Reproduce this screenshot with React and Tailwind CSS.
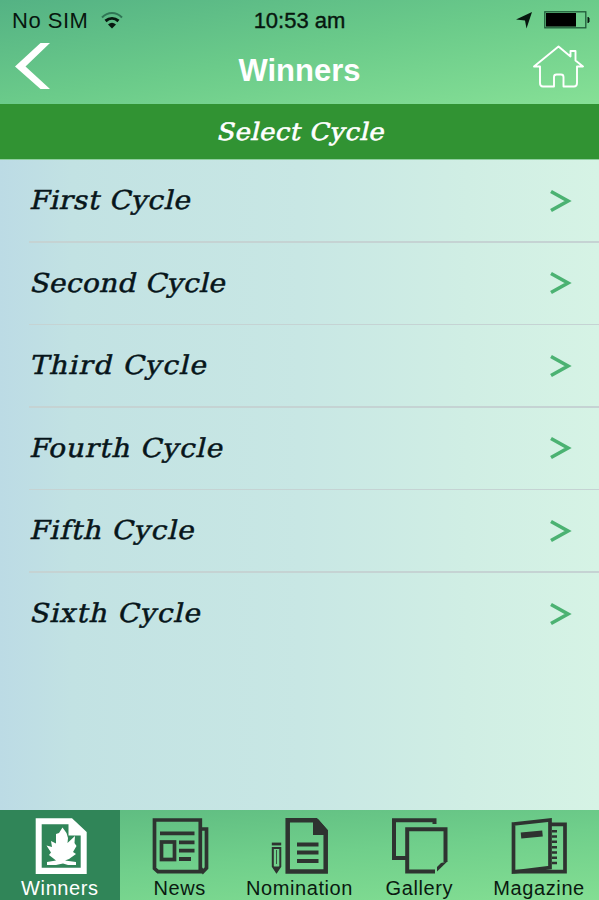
const CYCLES = [
  { label: 'First Cycle', spacing: 'tracking-[0.5px]' },
  { label: 'Second Cycle', spacing: 'tracking-[0.3px]' },
  { label: 'Third Cycle', spacing: 'tracking-[1.1px]' },
  { label: 'Fourth Cycle', spacing: 'tracking-[0.8px]' },
  { label: 'Fifth Cycle', spacing: 'tracking-[0.8px]' },
  { label: 'Sixth Cycle', spacing: 'tracking-[0.9px]' },
]

const TABS = [
  { label: 'Winners', Icon: WinnersIcon, active: true },
  { label: 'News', Icon: NewsIcon },
  { label: 'Nomination', Icon: NominationIcon },
  { label: 'Gallery', Icon: GalleryIcon },
  { label: 'Magazine', Icon: MagazineIcon },
]

export default function App() {
  return (
    <div className="flex h-[900px] w-[599px] flex-col overflow-hidden bg-[linear-gradient(90deg,#bcdbe5_0%,#c2e2e3_12%,#c8e7e4_50%,#d0eee4_78%,#d6f3e5_100%)] font-['Liberation_Sans',sans-serif]">
      <div className="h-[104px] shrink-0 bg-[linear-gradient(170deg,#54b284_0%,#6bcb8a_50%,#86e096_100%)]">
        <StatusBar />
        <Header />
      </div>

      <div className="flex h-[56px] shrink-0 items-center justify-center border-b border-[#8fcf9f] bg-[#319333]">
        <h2 className="ml-[5px] scale-x-[1.08] -skew-x-12 font-['DejaVu_Serif',serif] text-[24px] leading-none tracking-[0.4px] text-white [-webkit-text-stroke:0.6px_white]">
          Select Cycle
        </h2>
      </div>

      <ul className="flex-1">
        {CYCLES.map((c, i) => (
          <li key={c.label} className="flex h-[82.5px] flex-col pl-[29px]">
            <div className="flex flex-1 items-center justify-between pr-[27px]">
              <span className={`mb-px ml-[2px] origin-left scale-x-[1.08] -skew-x-12 font-['DejaVu_Serif',serif] text-[26px] leading-none text-[#07151a] [-webkit-text-stroke:0.5px_#07151a] ${c.spacing}`}>
                {c.label}
              </span>
              <svg width="24" height="24" viewBox="0 0 24 24" fill="none" stroke="#4bb272" strokeWidth="3.6">
                <path d="M3 2.5L20 12L3 21.5" />
              </svg>
            </div>
            {i < CYCLES.length - 1 && <div className="h-[1.5px] bg-[#c5d3d3]" />}
          </li>
        ))}
      </ul>

      <nav className="grid h-[90px] shrink-0 grid-cols-5 bg-[linear-gradient(175deg,#5dba80_0%,#70cf8b_50%,#83de93_100%)]">
        {TABS.map(({ label, Icon, active }) => (
          <div
            key={label}
            className={`flex flex-col items-center pt-[5px] ${active ? 'bg-[#308558] text-white' : 'text-[#0a1a10]'}`}
          >
            <Icon />
            <span className="mt-[2px] text-[20px] leading-[22px] tracking-[0.6px] whitespace-nowrap">{label}</span>
          </div>
        ))}
      </nav>
    </div>
  )
}

function StatusBar() {
  return (
    <div className="grid h-[40px] grid-cols-3 items-center text-[22px] text-[#07170f]">
      <div className="flex items-center gap-[13px] pl-[12px]">
        <span className="tracking-[0.5px]">No SIM</span>
        <svg width="22" height="17" viewBox="0 0 22 17" fill="none">
          <path d="M1 5.5C7-.5 15-.5 21 5.5" stroke="#2f7555" strokeWidth="2" />
          <path d="M4.5 9C8.500 5.500 13.500 5.500 17.500 9" stroke="#07170f" strokeWidth="3" />
          <path d="M7 12.500Q11 9 15 12.500L11 16.500Z" fill="#07170f" />
        </svg>
      </div>
      <span className="text-center [-webkit-text-stroke:0.4px_#07170f]">10:53 am</span>
      <div className="flex items-center justify-end gap-[11px] pr-[9px]">
        <svg width="18" height="17" viewBox="0 0 18 17" fill="#07170f">
          <path d="M17 0L11.500 16.500L10 8.500L1 7.500Z" />
        </svg>
        <svg width="46" height="18" viewBox="0 0 46 18">
          <rect x=".8" y=".8" width="41" height="16" fill="none" stroke="#1f5a39" strokeWidth="1.300" />
          <rect x="2" y="2" width="30" height="13.600" fill="#000" />
          <path d="M43.500 6h1l1 1.500v3l-1 1.500h-1z" fill="#07170f" />
        </svg>
      </div>
    </div>
  )
}

function Header() {
  return (
    <div className="grid h-[60px] grid-cols-3 items-center">
      <svg className="mt-[-8px] ml-[15px]" width="36" height="48" viewBox="0 0 36 48" fill="#fff">
        <path d="M25.500 1H35L10.500 24.500L35 47H25.500L0 24.500Z" />
      </svg>
      <h1 className="text-center text-[31px] leading-none font-bold text-white">Winners</h1>
      <svg className="mt-[-6px] mr-[15px] justify-self-end" width="52" height="44" viewBox="0 0 52 44" fill="none" stroke="#fff" strokeWidth="1.900" strokeLinejoin="round">
        <path d="M8 21.500H2L26.500 1.500L38.500 11.500V6H43.500V15.500L51 21.500H45V38Q45 41.500 42 41.500H31.500V32Q31.500 29.500 29 29.500H24.500Q22 29.500 22 32V41.500H11Q8 41.500 8 38Z" />
      </svg>
    </div>
  )
}

function WinnersIcon() {
  return (
    <svg className="shrink-0" width="60" height="60" viewBox="0 0 60 60" fill="#fff">
      <path fillRule="evenodd" d="M5.700 3.300H42L56.700 17V59H5.700ZM11.700 9.300V52.700H50.700V20.500H38.500V9.300Z" />
      <path d="M32.500 12.500L36.500 18L38 23L37.500 28L45 21L44.500 28L46.500 31L43 37L46 39L39 44L35 45.500L46 47V50H38L33 48.500L26 50H17V47L26 45.500L19 40L21 37.500L16.500 30.500L22 32L21 26L26 28.500L26 19L29 18Z" />
    </svg>
  )
}

function NewsIcon() {
  return (
    <svg className="shrink-0" width="60" height="60" viewBox="0 0 60 60" fill="none" stroke="#2e3330" strokeWidth="3.700">
      <path d="M4.500 5H50.300V56.700H8L4.500 53.500Z" />
      <path d="M50.300 14H56.500V53L53 56.700L50.300 53" />
      <path d="M10 18.300H44.500M29 27.300H44.500M29 35.700H44.500M29 44H41" strokeWidth="3.800" />
      <rect x="11.500" y="27" width="13" height="17.500" />
    </svg>
  )
}

function NominationIcon() {
  return (
    <svg className="shrink-0" width="60" height="60" viewBox="0 0 60 60" fill="none" stroke="#2e3330">
      <path d="M18.700 5.300H47L56.700 16V56.500H18.700Z" strokeWidth="4.500" />
      <path d="M44 4H49L58.500 15V20H44Z" fill="#2e3330" stroke="none" />
      <path d="M28 29.500H49.500M28 37.500H49.500M28 46H49.500" strokeWidth="4.200" />
      <path d="M2.800 29H12.200" strokeWidth="2.800" />
      <path d="M3.800 33H11.300V51.500L7.500 57L3.800 51.500Z" strokeWidth="2" />
      <path d="M7.500 35V49" strokeWidth="0.800" />
      <path d="M3.800 51.500H11.300L7.500 58.500Z" fill="#2e3330" stroke="none" />
    </svg>
  )
}

function GalleryIcon() {
  return (
    <svg className="shrink-0" width="60" height="60" viewBox="0 0 60 60" fill="none" stroke="#2e3330" strokeWidth="4">
      <path d="M45.500 9V5.200H5V43H17" />
      <path d="M46 56.500H18.200V14.200H56.500V47" />
      <path d="M58.300 46.500L48 56.500V52L52 48Z" fill="#2e3330" stroke="none" />
    </svg>
  )
}

function MagazineIcon() {
  return (
    <svg className="shrink-0" width="60" height="60" viewBox="0 0 60 60" fill="none" stroke="#2e3330" strokeWidth="3.700">
      <path d="M4.500 9L41 5V52.500L4.500 57Z" />
      <path d="M41 9.300H56V56.700H4.500" />
      <path d="M12 20.500L33.500 18.500" strokeWidth="6" />
      <path d="M45.500 15V51" strokeWidth="5" strokeDasharray="2.500 2.800" />
    </svg>
  )
}
